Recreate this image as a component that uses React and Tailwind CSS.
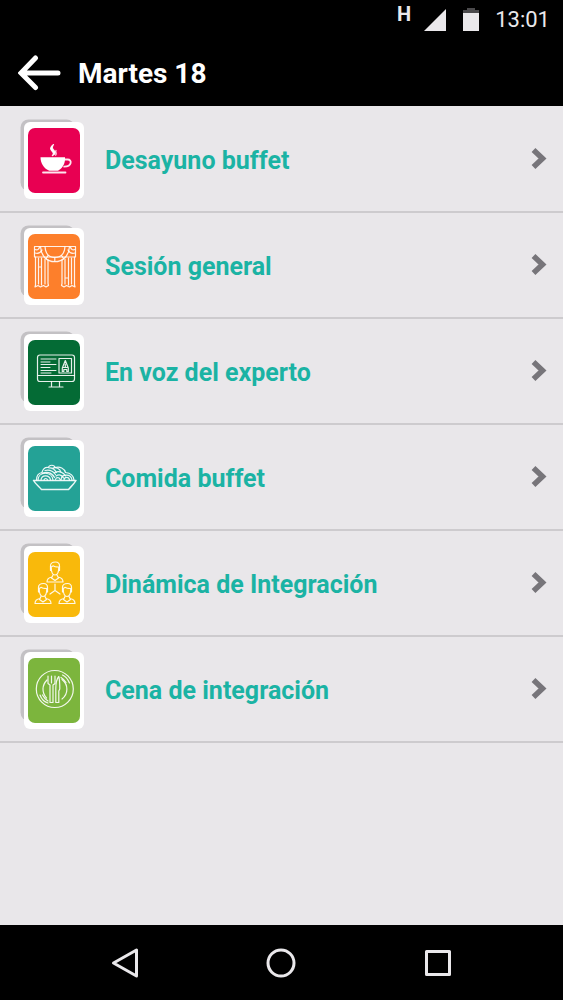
import React from 'react';

// Every badge glyph is drawn on the same 64x80 card
function Badge({ color, children }) {
  return (
    <svg width="64" height="80" viewBox="0 0 64 80" fill="none" className="shrink-0" aria-hidden="true">
      <rect x="0.5" y="0.5" width="54" height="71" rx="8" fill="#c3c1c4" />
      <rect x="4" y="3" width="60" height="77" rx="6" fill="#fff" />
      <rect x="8" y="9" width="52" height="65" rx="7" fill={color} />
      <g stroke="#fff" strokeOpacity="0.9" strokeWidth="1.2" strokeLinecap="round" strokeLinejoin="round">
        {children}
      </g>
    </svg>
  );
}

function CupGlyph() {
  return (
    <>
      <path d="M20.5 38.2H45v1.8c0 5.5-3 9.5-7 11.7h-8.8c-5-2.2-8.7-7-8.7-13.5z" fill="#fff" stroke="none" />
      <path d="M44.5 40.5h3.2c4.500 0 4.500 7-3.500 7.200" strokeWidth="1.8" />
      <path d="M23 53.5h22.5" strokeWidth="1.8" />
      <path d="M33.5 25.5c-5 3.500-2.500 5.500-.7 7.500 1.400 1.600.6 2.600-.5 3.600 3.500-1.500 3.500-3.500 1.700-5.200-2-2-2.300-3-.5-5.900z" fill="#fff" />
      <path d="M36 31.500c-1 1.800 1.200 2.500-.3 4.700" />
    </>
  );
}

function CurtainGlyph() {
  return (
    <>
      <path d="M14.5 21.500h41v10.500h-41z" />
      <path d="M20.5 21.500c.5 9 6 15.200 14.300 15.200S49 30.500 49.500 21.500" />
      <path d="M25 21.500c.5 7 4 11 9.800 11S44.500 28.500 45 21.500" />
      <path d="M28 30.500l-1.800 3M34.800 33v3M41.500 30.500l2 3M15 28c4 1 6-1 7-3M55 28c-4 1-6-1-7-3M15 24.500c3 1 4-.5 4.500-2.500M55 24.500c-3 1-4-.5-4.500-2.500" />
      <path d="M15.500 32v28l-.5 2 3-1.500 2.500 1.500 3-1.500 2.500 1.500 2.500-1.500-.5-2V35" />
      <path d="M18.500 33v26M21.500 33v27M25 34v25M18.500 42h3" />
      <path d="M54.500 32v28l.5 2-3-1.500-2.500 1.500-3-1.500-2.500 1.500-2.500-1.500.5-2V35" />
      <path d="M51.500 33v26M48.500 33v27M45 34v25M45 53h3" />
    </>
  );
}

function MonitorGlyph() {
  return (
    <>
      <rect x="17.5" y="24" width="37" height="26.500" rx="2.500" />
      <path d="M18 44.500h36.500M31.500 50.500v5M39.500 50.500v5M29 56h14" />
      <path d="M21 28h15M21 31h9M21 33.500h15M21 36.500h9M21 39.500h15M21 42h10" strokeWidth="1" />
      <path d="M39 27.500h12.500v14.500H39z" />
      <path d="M45.300 29.500l-3 7.500v3.500h1.500v-2h3v2h1.500V37zM43 36.500h4.600M45.300 33v3" />
    </>
  );
}

function NoodlesGlyph() {
  return (
    <>
      <path d="M13.5 43.500h42.500c-2 3.500-5 6-7.500 9h-27c-2.500-3-6-5.500-8-9z" strokeWidth="1.500" />
      <path d="M16.5 43c0-5 2.500-7 5.500-7.500 1-4 3.500-5.500 6.500-5 .5-3 6-3 6.500 0 5-1.500 9.500 1 10.500 5 4.500.5 8 2.500 8.500 7.500" />
      <path d="M18 43c.5-9 14-9 15 0M21 43c.5-5.500 8.500-5.500 9.500 0M24 43c.5-2 3-2 3.500 0" />
      <path d="M22 36.500c4-2.500 10-1 12.500 4M25 33.500c4-1 8 .5 10.500 4M29 31c4-.5 6 2 7.500 4.500M32 31.500c4-2 8 0 9 4M34 36c5-3 10-.5 11.500 3M36 39c3-2 6-1 7.500 2" />
      <path d="M41 43c.5-6.500 10-6.500 11 0M44 43c.5-3.500 5-3.500 5.500 0M35.500 42.500c.5-2.500 4-2.500 4.500 0" />
    </>
  );
}

function Person({ x, y }) {
  return (
    <g transform={`translate(${x} ${y})`}>
      <path d="M-4.500 2v-4.500c0-3 2-4 5-4 3 0 4 1.500 4 4V2" />
      <path d="M-3.800-1.500C-3.800 4.500-2 6.500 0 6.500s3.800-2 3.800-8c-2 0-4.500-.2-5.500-1.200z" />
      <path d="M-2 6.500L-3.500 9.500 0 12l3.500-2.500L2 6.500M-3 8.500c-3.500.5-5 2-5 5H8c0-3-1.500-4.500-5-5" />
    </g>
  );
}

function TeamGlyph() {
  return (
    <>
      <Person x="35" y="25.500" />
      <Person x="23" y="47" />
      <Person x="47" y="47" />
      <path d="M35 41v6.500M35 47.500l-5 3.500M35 47.500l5 3.500" />
    </>
  );
}

function PlateGlyph() {
  return (
    <>
      <circle cx="34.800" cy="40" r="18.500" />
      <path d="M27 31c-5 5-5.500 12.500-.5 18M42 30.500c6.500 5 6.500 14.500 0 19.500" />
      <path d="M42.500 26c3.500 1.500 5.500 4.500 7 8M41 28.500c2.500 1.500 4 3 5 5M20 46c1.500 4 4.500 7 8 8M22.500 46c1.500 3 3 4.500 5.500 6" />
      <path d="M28 27v7.500l2 1.500v17.500h3V36l2-1.500V27M31.500 27v7" />
      <path d="M38.800 27.500c-2.500 3-3 7.500-3 12v14h3V42l1-2c0-5 0-9-1-12.500z" />
    </>
  );
}

const sessions = [
  { title: 'Desayuno buffet', color: '#e80052', Glyph: CupGlyph },
  { title: 'Sesión general', color: '#fd7f2b', Glyph: CurtainGlyph },
  { title: 'En voz del experto', color: '#046b35', Glyph: MonitorGlyph },
  { title: 'Comida buffet', color: '#24a296', Glyph: NoodlesGlyph },
  { title: 'Dinámica de Integración', color: '#f9b90b', Glyph: TeamGlyph },
  { title: 'Cena de integración', color: '#7cb53d', Glyph: PlateGlyph },
];

function StatusBar() {
  return (
    <div className="flex h-10 items-center justify-end pr-[13px] text-[#eae8eb]">
      <span className="mr-3 -mt-3 text-xl font-bold leading-5">H</span>
      <svg width="24" height="24" viewBox="0 0 24 24" fill="currentColor" aria-hidden="true">
        <path d="M23 1v22H1z" />
      </svg>
      <svg width="16" height="24" viewBox="0 0 16 24" className="ml-4" aria-hidden="true">
        <path d="M4 0h8v2h4v4H0V2h4z" fill="#4b4a4c" />
        <path d="M0 5h16v18H0z" fill="currentColor" />
      </svg>
      <span className="ml-4 text-[22px] leading-6">13:01</span>
    </div>
  );
}

function SessionRow({ title, color, Glyph }) {
  return (
    <li className="border-b-2 border-[#cdcbce]">
      <a href="#" className="flex h-[104px] items-center pl-5 pr-4">
        <Badge color={color}>
          <Glyph />
        </Badge>
        <span className="ml-[21px] flex-1 pt-1 text-[25px] font-bold leading-8 text-[#1bb3a4]">{title}</span>
        <svg width="16" height="22" viewBox="0 0 16 22" fill="none" aria-hidden="true">
          <path d="M2.500 2L11.500 10.500l-9 8.500" stroke="#77757a" strokeWidth="5.500" />
        </svg>
      </a>
    </li>
  );
}

export default function App() {
  return (
    <div className="flex min-h-screen flex-col bg-[#e9e7ea] font-[Roboto,sans-serif]">
      <header className="bg-black">
        <StatusBar />
        <div className="flex h-[66px] items-center pl-[18px]">
          <button type="button" aria-label="Volver">
            <svg width="44" height="36" viewBox="0 0 44 36" fill="none" stroke="#fff" strokeWidth="5" strokeLinecap="round" aria-hidden="true">
              <path d="M17.500 3L3 18l14.500 14.500M3.500 18H40" />
            </svg>
          </button>
          <h1 className="ml-4 pt-0.5 text-[28px] font-bold leading-8 text-white">Martes 18</h1>
        </div>
      </header>

      <main className="flex-1">
        <ul className="pt-px">
          {sessions.map((session) => (
            <SessionRow key={session.title} {...session} />
          ))}
        </ul>
      </main>

      <nav className="flex h-[75px] items-center bg-black px-[47px] text-[#eae8eb]">
        <button type="button" aria-label="Atrás" className="flex flex-1 justify-center">
          <svg width="32" height="32" viewBox="0 0 32 32" fill="none" stroke="currentColor" strokeWidth="3" strokeLinejoin="round" aria-hidden="true">
            <path d="M27.500 3v26L4.500 16z" />
          </svg>
        </button>
        <button type="button" aria-label="Inicio" className="flex flex-1 justify-center">
          <svg width="32" height="32" viewBox="0 0 32 32" fill="none" stroke="currentColor" strokeWidth="3" aria-hidden="true">
            <circle cx="16" cy="16" r="13" />
          </svg>
        </button>
        <button type="button" aria-label="Recientes" className="flex flex-1 justify-center">
          <svg width="32" height="32" viewBox="0 0 32 32" fill="none" stroke="currentColor" strokeWidth="3" strokeLinejoin="round" aria-hidden="true">
            <path d="M4.500 4.500h23v23h-23z" />
          </svg>
        </button>
      </nav>
    </div>
  );
}
